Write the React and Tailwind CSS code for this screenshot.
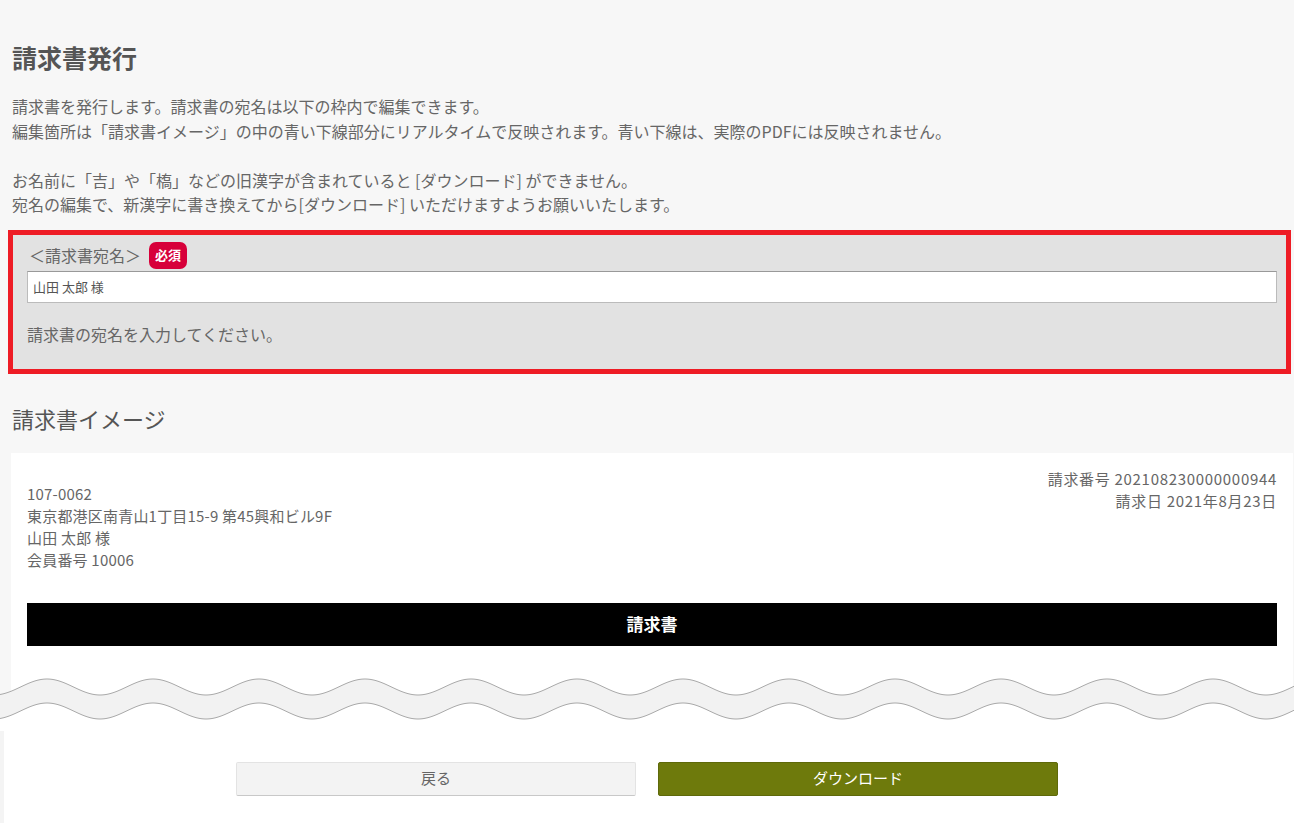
import * as React from "react"

const font = { fontFamily: '"Noto Sans CJK JP", "Noto Sans", sans-serif' }

// wave band between the invoice preview and the buttons
function Wave() {
  const w = 1294
  const period = 106
  const top = []
  const bottom = []
  for (let x = 0; x <= w; x += 2) {
    const c = Math.cos((2 * Math.PI * (x - 47)) / period)
    top.push([x, 12 - 8 * c])
    bottom.push([x, 36 - 8 * c])
  }
  const line = (pts) => pts.map((p, i) => `${i ? "L" : "M"}${p[0]},${p[1].toFixed(2)}`).join(" ")
  const band = line(top) + " " + [...bottom].reverse().map((p) => `L${p[0]},${p[1].toFixed(2)}`).join(" ") + " Z"
  const below = line(bottom) + ` L${w},56 L0,56 Z`
  return (
    <svg width={w} height="56" viewBox={`0 0 ${w} 56`} className="block">
      <rect x="11" y="0" width="1282" height="20" fill="#ffffff" />
      <path d={below} fill="#ffffff" />
      <path d={band} fill="#f2f2f2" />
      <path d={line(top)} fill="none" stroke="#a9a9a9" strokeWidth="1" />
      <path d={line(bottom)} fill="none" stroke="#a9a9a9" strokeWidth="1" />
    </svg>
  )
}

export default function App() {
  return (
    <div className="w-[1294px] min-h-[823px] bg-[#f7f7f7] text-[#666]" style={font}>
      <div className="px-[11px] pt-[38px]">
        <h1 className="pl-[1px] text-[25px] leading-[38px] font-bold text-[#555]">請求書発行</h1>

        <div className="mt-[18px] pl-[1px] text-[16px] leading-[24.5px]">
          <p>請求書を発行します。請求書の宛名は以下の枠内で編集できます。</p>
          <p>編集箇所は「請求書イメージ」の中の青い下線部分にリアルタイムで反映されます。青い下線は、実際のPDFには反映されません。</p>
          <p>&nbsp;</p>
          <p>お名前に「吉」や「槗」などの旧漢字が含まれていると [ダウンロード] ができません。</p>
          <p>宛名の編集で、新漢字に書き換えてから[ダウンロード] いただけますようお願いいたします。</p>
        </div>

        {/* 宛名入力 */}
        <div className="-ml-[3px] mr-[-8px] mt-[13px] border-[5px] border-[#ee1c25] bg-[#e2e2e2] pl-[14px] pr-[9px] pt-[7px] pb-[23px]">
          <div className="flex items-center gap-[8px] h-[27px]">
            <span className="pl-[2px] text-[16px] text-[#666]">＜請求書宛名＞</span>
            <span className="flex h-[27px] w-[38px] items-center justify-center rounded-[7px] bg-[#d7003a] text-[13px] font-bold text-white">必須</span>
          </div>
          <input
            type="text"
            defaultValue="山田 太郎 様"
            className="mt-[2px] block h-[32px] w-full border border-[#bbb] border-t-[#999] bg-white px-[5px] text-[13px] text-[#555] outline-none"
            style={font}
          />
          <p className="mt-[19px] text-[16px] leading-[24px]">請求書の宛名を入力してください。</p>
        </div>

        <h2 className="mt-[28px] pl-[1px] text-[22px] leading-[33px] text-[#555]">請求書イメージ</h2>

        {/* 請求書イメージ */}
        <div className="mt-[18px] mr-[-10px] bg-white px-[16px] pt-[15px] pb-[29px]">
          <div className="flex justify-between text-[15px] leading-[22px]">
            <div className="pt-[15px] tracking-[0.2px]">
              <p>107-0062</p>
              <p>東京都港区南青山1丁目15-9 第45興和ビル9F</p>
              <p>山田 太郎 様</p>
              <p>会員番号 10006</p>
            </div>
            <div className="text-right tracking-[0.7px]">
              <p>請求番号 202108230000000944</p>
              <p>請求日 2021年8月23日</p>
            </div>
          </div>
          <div className="mt-[32px] flex h-[43px] items-center justify-center bg-black text-[17px] font-bold text-white">請求書</div>
        </div>
      </div>

      <Wave />

      <div className="border-l-4 border-[#f4f4f4] bg-white pt-[31px] pb-[30px]">
        <div className="flex justify-center gap-[22px] pr-[4px]">
          <button className="h-[34px] w-[400px] rounded-[2px] border border-[#e3e3e3] border-b-[#c8c8c8] bg-[#f3f3f3] text-[15px] text-[#666]" style={font}>戻る</button>
          <button className="h-[34px] w-[400px] rounded-[2px] border border-[#5e690a] bg-[#6e7a0c] text-[15px] text-white" style={font}>ダウンロード</button>
        </div>
      </div>
    </div>
  )
}
